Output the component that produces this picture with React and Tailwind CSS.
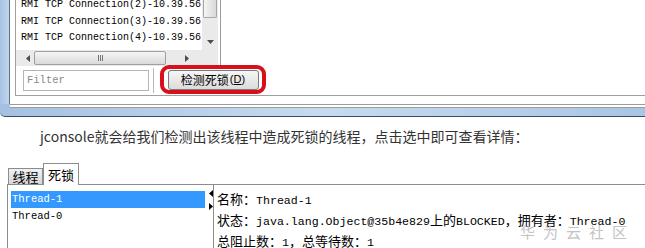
import React from "react";

const MONO = { fontFamily: '"Liberation Mono", "Noto Sans CJK SC", monospace' };

function Mixed({ text }) {
  const parts = text.split(/([\u3000-\u9fff\uff00-\uffef]+)/).filter(Boolean);
  return (
    <>
      {parts.map((p, i) =>
        /[\u3000-\u9fff\uff00-\uffef]/.test(p) ? (
          <span key={i} className="text-[13px] font-['Noto_Sans_CJK_SC',sans-serif]">
            {p}
          </span>
        ) : (
          <span key={i} className="text-[11.6px] font-['Liberation_Mono',monospace]">
            {p}
          </span>
        )
      )}
    </>
  );
}

function TriDown() {
  return (
    <svg width="7" height="4" viewBox="0 0 7 4">
      <path d="M0 0 L7 0 L3.5 4 Z" fill="#4d4d4d" />
    </svg>
  );
}
function TriLeft({ c = "#4d4d4d" }) {
  return (
    <svg width="4" height="7" viewBox="0 0 4 7">
      <path d="M4 0 L4 7 L0 3.5 Z" fill={c} />
    </svg>
  );
}
function TriRight({ c = "#4d4d4d" }) {
  return (
    <svg width="4" height="7" viewBox="0 0 4 7">
      <path d="M0 0 L0 7 L4 3.5 Z" fill={c} />
    </svg>
  );
}

export default function App() {
  const rows = [
    "RMI TCP Connection(2)-10.39.56",
    "RMI TCP Connection(3)-10.39.56",
    "RMI TCP Connection(4)-10.39.56",
  ];
  return (
    <div className="w-[645px] h-[248px] bg-white overflow-hidden relative">
      {/* top window fragment */}
      <div className="h-[117px] flex flex-col">
        <div className="flex h-[104px]">
          <div className="w-[10px] bg-gradient-to-r from-[#a6c2e3] to-[#c2d7ee] border-r border-[#5a6f88]" />
          <div className="flex-1 bg-white pl-[5px]">
            <div className="h-[96px] border-l border-b border-[#a0a0a0] flex flex-col">
              {/* list box */}
              <div className="h-[66px] w-[205px] border-r border-[#9a9a9a] flex flex-col">
                <div className="flex h-[50px]">
                  <div className="w-[186px] overflow-hidden pl-[5px]">
                    <div className="mt-[-3px]">
                      {rows.map((r) => (
                        <div
                          key={r}
                          className="h-[16.5px] leading-[16.5px] text-[10px] text-black whitespace-nowrap"
                          style={MONO}
                        >
                          {r}
                        </div>
                      ))}
                    </div>
                  </div>
                  <div className="w-[16px] bg-[#eaeaea] flex flex-col">
                    <div className="h-[18px] mx-[1px] rounded-b-[2px] border border-t-0 border-[#a7a7a7] bg-gradient-to-r from-[#f4f4f4] to-[#d9d9d9]" />
                    <div className="flex-1" />
                    <div className="h-[16px] flex items-center justify-center">
                      <TriDown />
                    </div>
                  </div>
                </div>
                <div className="flex h-[16px]">
                  <div className="w-[186px] bg-[#eaeaea] flex items-center">
                    <div className="w-[18px] flex justify-end pr-[4px]">
                      <TriLeft />
                    </div>
                    <div className="w-[132px] h-[14px] rounded-[2px] border border-[#9f9f9f] bg-gradient-to-b from-[#f5f5f5] to-[#dadada] flex items-center justify-center">
                      <div className="flex gap-[1px]">
                        <div className="w-[1px] h-[6px] bg-[#777]" />
                        <div className="w-[1px] h-[6px] bg-[#777]" />
                        <div className="w-[1px] h-[6px] bg-[#777]" />
                      </div>
                    </div>
                    <div className="flex-1 flex justify-center pl-[6px]">
                      <TriRight />
                    </div>
                  </div>
                  <div className="w-[16px] bg-[#eaeaea]" />
                </div>
              </div>
              {/* filter row */}
              <div className="h-[29px] flex items-start">
                <div className="ml-[7px] mt-[4px] w-[126px] h-[21px] border border-[#b5b5b5] flex items-center pl-[3px]">
                  <span className="text-[10.5px] text-[#8a8a8a]" style={MONO}>
                    Filter
                  </span>
                </div>
                <div className="ml-[4px] mt-[2px] w-[2px] h-[25px] border-l border-[#b9b9b9] border-r border-r-white" />
                <div className="ml-[5px] mt-[-1px] w-[106px] h-[29px] border-[4px] border-[#d7111c] rounded-[9px] flex items-center justify-center">
                  <div className="w-[91px] h-[20px] border border-[#7a7a7a] rounded-[3px] bg-gradient-to-b from-[#f6f6f6] to-[#dcdcdc] flex items-center justify-center text-[12px] text-black">
                    <span className="font-['Noto_Sans_CJK_SC',sans-serif] leading-none">检测死锁</span>
                    <span className="text-[11px] leading-none ml-[1px] font-['Liberation_Sans',sans-serif]">
                      (<span className="underline">D</span>)
                    </span>
                  </div>
                </div>
              </div>
            </div>
          </div>
        </div>
        <div className="h-[13px] flex flex-col bg-gradient-to-r from-[#a5c1e2] via-[#c6dbef] to-[#a9c5e5] rounded-bl-[5px] border-b border-[#3c4c60]">
          <div className="ml-[10px] h-[4px] border-t border-b border-[#9c9c9c] bg-white" />
        </div>
      </div>

      {/* paragraph */}
      <div className="pl-[40px] pt-[9px] h-[45px]">
        <p className="text-[14px] leading-[20px] text-[#333] font-['Noto_Sans_CJK_SC',sans-serif] whitespace-nowrap">
          jconsole就会给我们检测出该线程中造成死锁的线程，点击选中即可查看详情：
        </p>
      </div>

      {/* tabs */}
      <div className="flex items-end h-[22px] pl-[8px] relative z-10">
        <div className="w-[35px] h-[16px] border border-b-0 border-[#8c8c8c] bg-gradient-to-b from-[#f2f2f2] to-[#d6d6d6] flex items-center justify-center text-[13px] leading-none text-black font-['Noto_Sans_CJK_SC',sans-serif]">
          线程
        </div>
        <div className="w-[36px] h-[22px] mb-[-1px] border border-b-0 border-[#8c8c8c] bg-white flex items-center justify-center text-[13px] leading-none text-black font-['Noto_Sans_CJK_SC',sans-serif]">
          死锁
        </div>
      </div>
      <div className="ml-[7px] border-t border-l border-[#8c8c8c] flex h-[80px]">
        <div className="w-[197px] pt-[6px] pl-[3px]">
          <div className="h-[17px] bg-[#3399ff] text-white text-[10.5px] leading-[17px] pl-[1px]" style={MONO}>
            Thread-1
          </div>
          <div className="h-[17px] text-black text-[10.5px] leading-[17px] pl-[1px]" style={MONO}>
            Thread-0
          </div>
        </div>
        <div className="w-[9px] border-r border-[#8c8c8c] flex flex-col items-end pt-[5px]">
          <TriLeft c="#000" />
          <div className="h-[6px]" />
          <TriRight c="#000" />
        </div>
        <div className="pl-[3px] pt-[3px] text-black whitespace-nowrap">
          <div className="h-[21px] leading-[21px]">
            <Mixed text="名称：Thread-1" />
          </div>
          <div className="h-[21px] leading-[21px]">
            <Mixed text="状态：java.lang.Object@35b4e829上的BLOCKED，拥有者：Thread-0" />
          </div>
          <div className="h-[21px] leading-[21px]">
            <Mixed text="总阻止数：1，总等待数：1" />
          </div>
        </div>
      </div>

      {/* watermark */}
      <div className="absolute left-[520px] top-[221px] text-[15px] tracking-[8px] text-[#c4c4c4] font-['Noto_Sans_CJK_SC',sans-serif] whitespace-nowrap">
        华为云社区
      </div>
    </div>
  );
}
